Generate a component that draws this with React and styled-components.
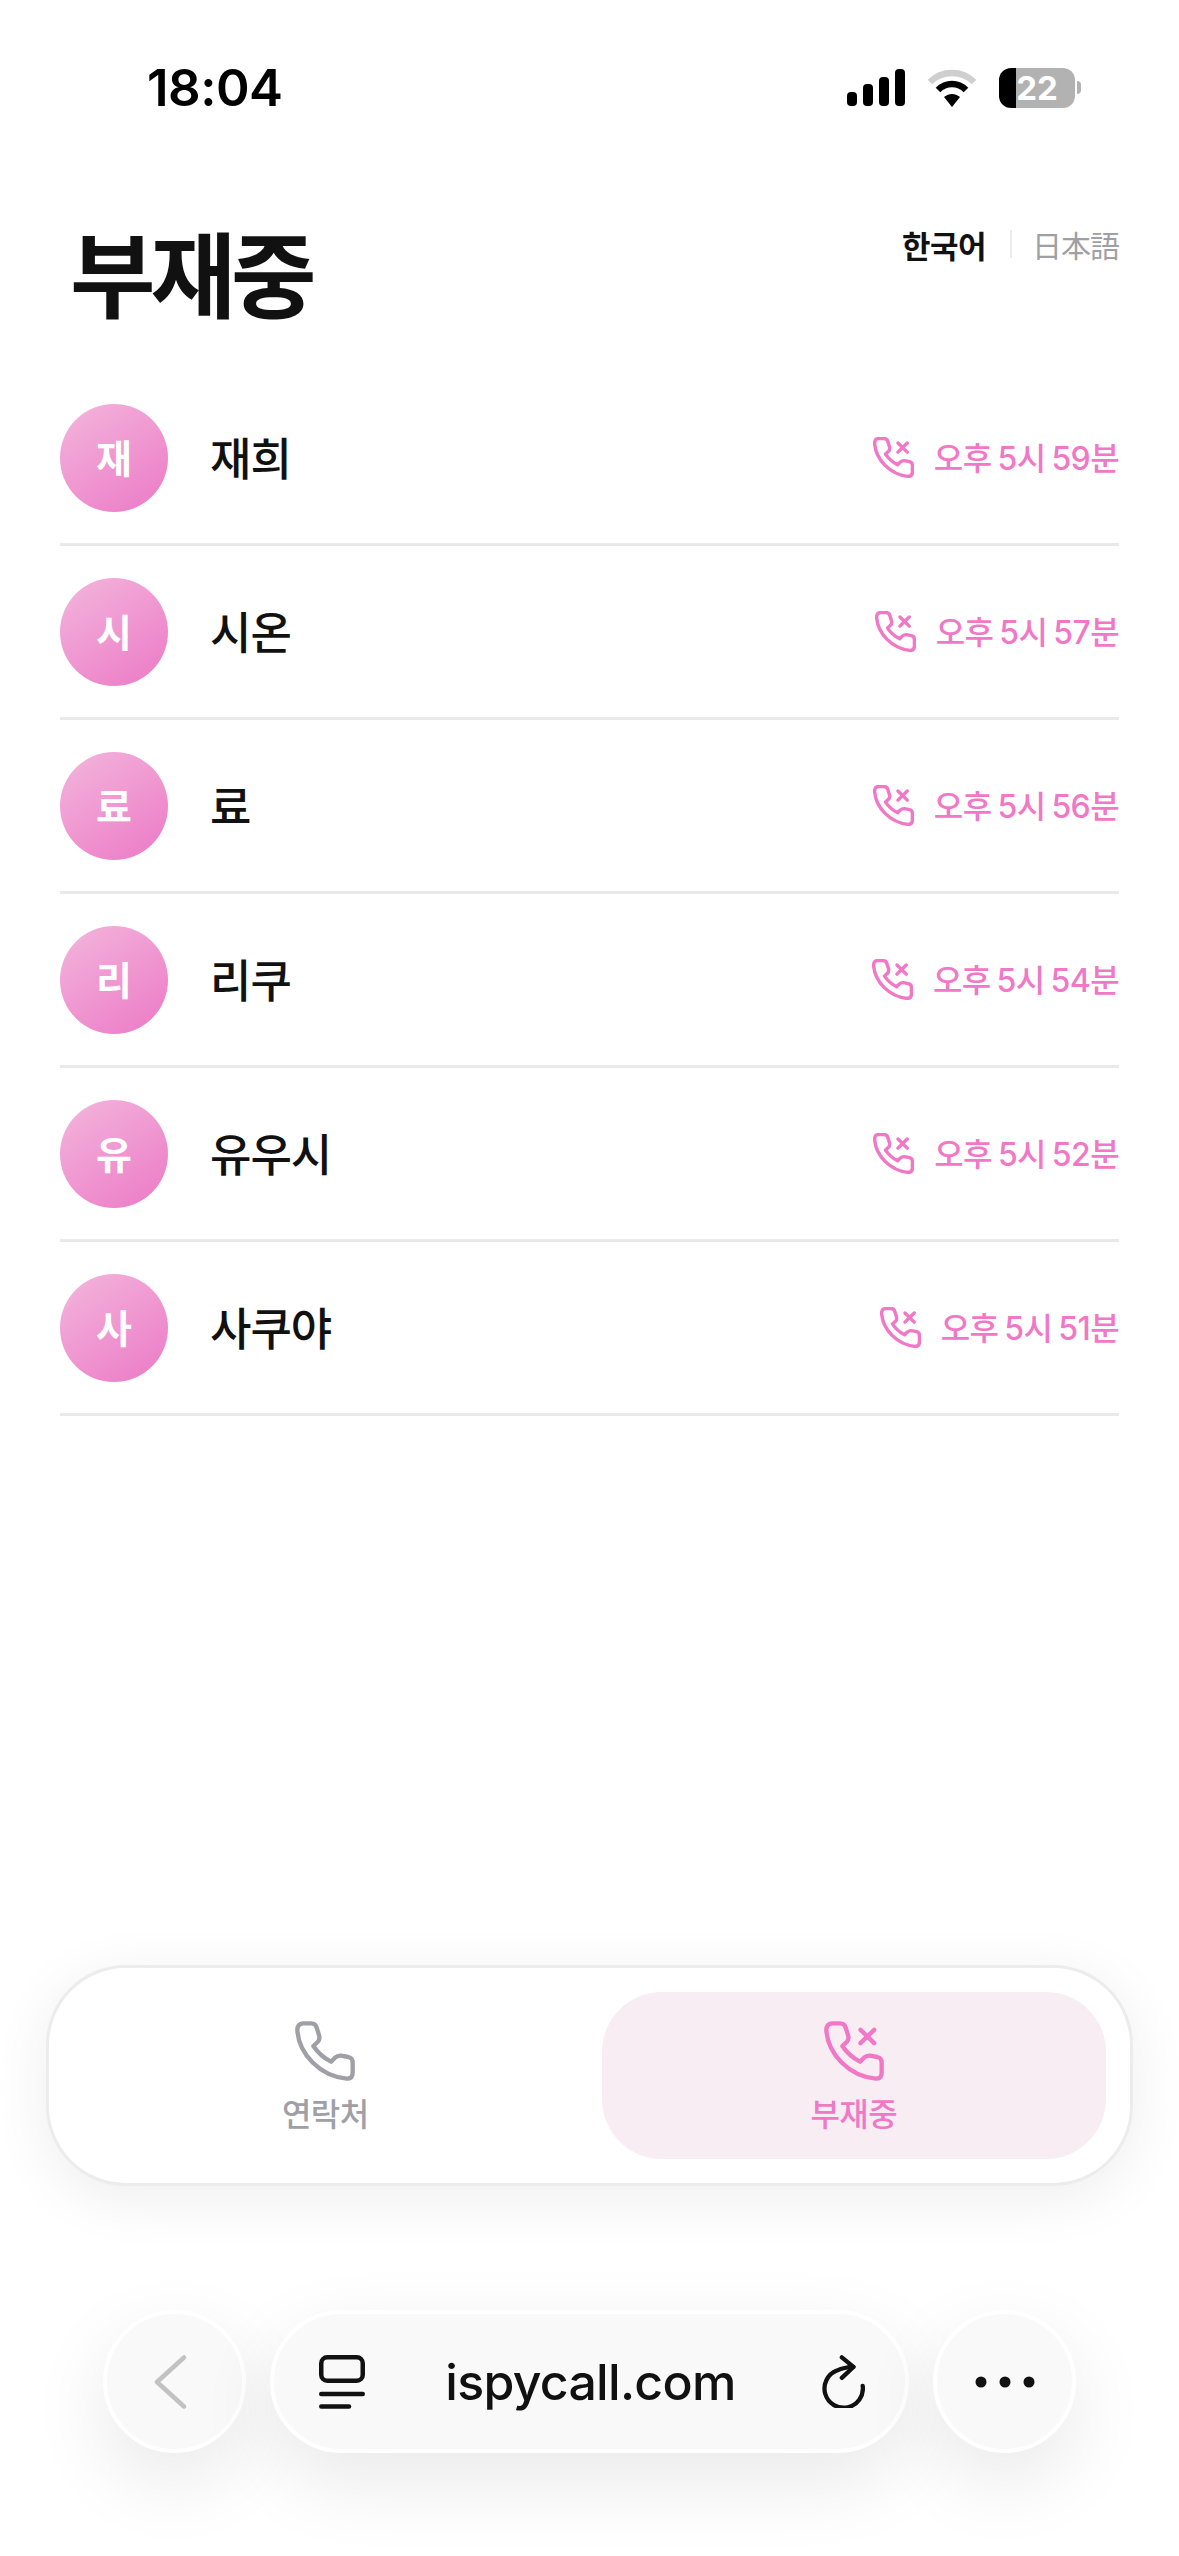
import React from 'react';
import styled, { createGlobalStyle } from 'styled-components';

const GlobalStyle = createGlobalStyle`
  html, body { margin: 0; padding: 0; background: #fff; }
  body { font-family: Inter, "Noto Sans CJK KR", sans-serif; color: #111; }
`;

const PINK = '#f178c6';
const GREY = '#9f9fa6';

const CALLS = [
  { name: '재희', time: '오후 5시 59분' },
  { name: '시온', time: '오후 5시 57분' },
  { name: '료', time: '오후 5시 56분' },
  { name: '리쿠', time: '오후 5시 54분' },
  { name: '유우시', time: '오후 5시 52분' },
  { name: '사쿠야', time: '오후 5시 51분' },
];

//===============================================
//Styled Components
//===============================================
const Page = styled.div`
  width: 1179px;
  height: 2556px;
  display: flex;
  flex-direction: column;
  overflow: hidden;
  background: #fff;
`;

const StatusBar = styled.div`
  height: 67px;
  padding: 54px 98px 0 147px;
  display: flex;
  align-items: center;
  justify-content: space-between;
`;

const Clock = styled.span`
  font-size: 51px;
  font-weight: 600;
  letter-spacing: -0.5px;
  color: #000;
`;

const StatusIcons = styled.div`
  display: flex;
  align-items: center;
  gap: 22px;
`;

const Battery = styled.div`
  width: 76px;
  height: 40px;
  border-radius: 12px;
  background: linear-gradient(90deg, #000 22%, #b2b2b2 22%);
  color: #fff;
  font-size: 33px;
  font-weight: 700;
  display: flex;
  align-items: center;
  justify-content: center;
`;

const BatteryWrap = styled.div`
  display: flex;
  align-items: center;
  gap: 2px;
`;

const BatteryTip = styled.div`
  width: 4px;
  height: 13px;
  border-radius: 0 7px 7px 0;
  background: #b2b2b2;
`;

const Header = styled.header`
  height: 251px;
  box-sizing: border-box;
  padding: 106px 60px 0 70px;
  display: flex;
  justify-content: space-between;
  align-items: flex-start;
`;

const Title = styled.h1`
  margin: 0;
  font-size: 93px;
  line-height: 100px;
  font-weight: 700;
  letter-spacing: -5px;
  color: #111;
`;

const LangSwitch = styled.div`
  display: flex;
  align-items: center;
  margin-top: -5px;
  height: 44px;
`;

const LangItem = styled.span`
  font-size: ${(p) => (p.$jp ? 30 : 31)}px;
  font-weight: ${(p) => (p.$active ? 700 : 400)};
  color: ${(p) => (p.$active ? '#111' : GREY)};
  font-family: ${(p) => (p.$jp ? '"Noto Sans CJK JP"' : '"Noto Sans CJK KR"')}, sans-serif;
  letter-spacing: ${(p) => (p.$jp ? -1 : -0.5)}px;
`;

const LangDivider = styled.span`
  width: 2px;
  height: 28px;
  margin: 0 20px 0 24px;
  background: #ececec;
`;

const List = styled.ul`
  list-style: none;
  margin: 0;
  padding: 0 60px;
`;

const Row = styled.li`
  height: 174px;
  box-sizing: border-box;
  border-bottom: 3px solid #e9e9e9;
  display: flex;
  align-items: center;
`;

const Avatar = styled.div`
  width: 108px;
  height: 108px;
  box-sizing: border-box;
  padding-bottom: 3px;
  border-radius: 50%;
  background: linear-gradient(145deg, #f3b6dc 0%, #ec79c6 100%);
  color: #fff;
  font-size: 39px;
  font-weight: 700;
  display: flex;
  align-items: center;
  justify-content: center;
`;

const Name = styled.span`
  margin-left: 42px;
  padding-bottom: 3px;
  font-size: 45px;
  font-weight: 500;
  letter-spacing: -1px;
  color: #111;
`;

const CallTime = styled.div`
  margin-left: auto;
  display: flex;
  align-items: center;
  gap: 20px;
  color: ${PINK};
  font-size: 32px;
  font-weight: 500;
  letter-spacing: -0.6px;
  word-spacing: -2px;
`;

const TimeText = styled.span`
  padding-bottom: 3px;
`;

const Spacer = styled.div`
  flex: 1;
`;

const TabBar = styled.nav`
  width: 1087px;
  height: 221px;
  box-sizing: border-box;
  margin: 0 0 0 46px;
  padding: 24px;
  display: grid;
  grid-template-columns: 1fr 1fr;
  gap: 24px;
  background: #fff;
  border: 3px solid #ececec;
  border-radius: 80px;
  box-shadow: 0 12px 60px rgba(0, 0, 0, 0.07);
`;

const Tab = styled.div`
  box-sizing: border-box;
  padding-top: 3px;
  border-radius: 60px;
  background: ${(p) => (p.$active ? '#f7edf3' : 'transparent')};
  color: ${(p) => (p.$active ? PINK : GREY)};
  display: flex;
  flex-direction: column;
  align-items: center;
  justify-content: center;
  gap: 15px;
`;

const TabLabel = styled.span`
  font-size: 32px;
  font-weight: 500;
  letter-spacing: -0.6px;
  line-height: 38px;
`;

const BrowserBar = styled.div`
  margin-top: 124px;
  margin-bottom: 103px;
  padding: 0 103px;
  display: flex;
  align-items: stretch;
  gap: 24px;
  height: 143px;
`;

const RoundButton = styled.div`
  width: 143px;
  flex: none;
  box-sizing: border-box;
  border-radius: 50%;
  border: 4px solid #fff;
  background: #f9f9f9;
  box-shadow: 0 28px 80px rgba(0, 0, 0, 0.09);
  display: flex;
  align-items: center;
  justify-content: center;
`;

const UrlPill = styled.div`
  flex: 1;
  box-sizing: border-box;
  border-radius: 72px;
  border: 4px solid #fff;
  background: #f9f9f9;
  box-shadow: 0 28px 80px rgba(0, 0, 0, 0.09);
  padding: 0 40px 0 45px;
  display: flex;
  align-items: center;
  justify-content: space-between;
`;

const UrlText = styled.span`
  margin-right: 5px;
  font-size: 50px;
  font-weight: 500;
  letter-spacing: -0.7px;
  color: #111;
`;

//===============================================
//Icons
//===============================================
const PhoneIcon = ({ size, missed, weight = 13 }) => (
  <svg width={size} height={size} viewBox="0 0 180 180" fill="none" stroke="currentColor" strokeWidth={weight} strokeLinecap="round" strokeLinejoin="round">
    <path d="M24 7H48Q62 7 65 20L72 42Q76 55 68 63L55 75Q75 105 108 122L120 110Q128 103 138 104L160 108Q173 111 173 124V155Q173 173 155 173C75 165 12 100 7 28Q7 8 24 7Z" />
    {missed && <path d="M109.5 26.5L150.5 66.5M150.5 26.5L109.5 66.5" />}
  </svg>
);

const Signal = () => (
  <svg width="58" height="37" viewBox="0 0 58 37" fill="#000">
    <rect x="0" y="23" width="10" height="14" rx="4" />
    <rect x="16" y="15" width="10" height="22" rx="4" />
    <rect x="32" y="8" width="10" height="29" rx="4" />
    <rect x="48" y="0" width="10" height="37" rx="4" />
  </svg>
);

const Wifi = () => (
  <svg width="50" height="38" viewBox="0 0 50 38" fill="none">
    <path d="M3 13 C15 1 35 1 47 13" stroke="#cfcfcf" strokeWidth="6.5" />
    <path d="M11 21 C19 13 31 13 39 21" stroke="#000" strokeWidth="6.5" />
    <path d="M17 28 C22 24 28 24 33 28 L25 38 Z" fill="#000" />
  </svg>
);

const BackIcon = () => (
  <svg width="42" height="54" viewBox="0 0 42 54" fill="none" stroke="#c2c2c2" strokeWidth="4.5" strokeLinecap="round" strokeLinejoin="round">
    <path d="M30 2.5L3 27L30 51.5" />
  </svg>
);

const TabsIcon = () => (
  <svg width="46" height="54" viewBox="0 0 46 54" fill="none" stroke="#111" strokeWidth="4.5" strokeLinecap="round">
    <rect x="2.25" y="2.25" width="41.5" height="23.5" rx="6" />
    <path d="M2.25 39H43.75" />
    <path d="M2.25 51.5H30" />
  </svg>
);

const ReloadIcon = () => (
  <svg width="44" height="53" viewBox="0 0 133 158" fill="none" stroke="#111" strokeWidth="13" strokeLinecap="round" strokeLinejoin="round">
    <path d="M126 92A58 58 0 1 1 48 46Q70 36 98 35" />
    <path d="M63 6L98 35L63 68" />
  </svg>
);

const MoreIcon = () => (
  <svg width="60" height="12" viewBox="0 0 60 12" fill="#111">
    <circle cx="6" cy="6" r="5.5" />
    <circle cx="30" cy="6" r="5.5" />
    <circle cx="54" cy="6" r="5.5" />
  </svg>
);

//===============================================
//App
//===============================================
export default function App() {
  return (
    <Page>
      <GlobalStyle />
      <StatusBar>
        <Clock>18:04</Clock>
        <StatusIcons>
          <Signal />
          <Wifi />
          <BatteryWrap>
            <Battery>22</Battery>
            <BatteryTip />
          </BatteryWrap>
        </StatusIcons>
      </StatusBar>

      <Header>
        <Title>부재중</Title>
        <LangSwitch>
          <LangItem $active>한국어</LangItem>
          <LangDivider />
          <LangItem $jp>日本語</LangItem>
        </LangSwitch>
      </Header>

      <List>
        {CALLS.map((call) => (
          <Row key={call.name}>
            <Avatar>{call.name[0]}</Avatar>
            <Name>{call.name}</Name>
            <CallTime>
              <PhoneIcon size={41} missed weight={15} />
              <TimeText>{call.time}</TimeText>
            </CallTime>
          </Row>
        ))}
      </List>

      <Spacer />

      <TabBar>
        <Tab>
          <PhoneIcon size={60} />
          <TabLabel>연락처</TabLabel>
        </Tab>
        <Tab $active>
          <PhoneIcon size={60} missed />
          <TabLabel>부재중</TabLabel>
        </Tab>
      </TabBar>

      <BrowserBar>
        <RoundButton><BackIcon /></RoundButton>
        <UrlPill>
          <TabsIcon />
          <UrlText>ispycall.com</UrlText>
          <ReloadIcon />
        </UrlPill>
        <RoundButton><MoreIcon /></RoundButton>
      </BrowserBar>
    </Page>
  );
}
